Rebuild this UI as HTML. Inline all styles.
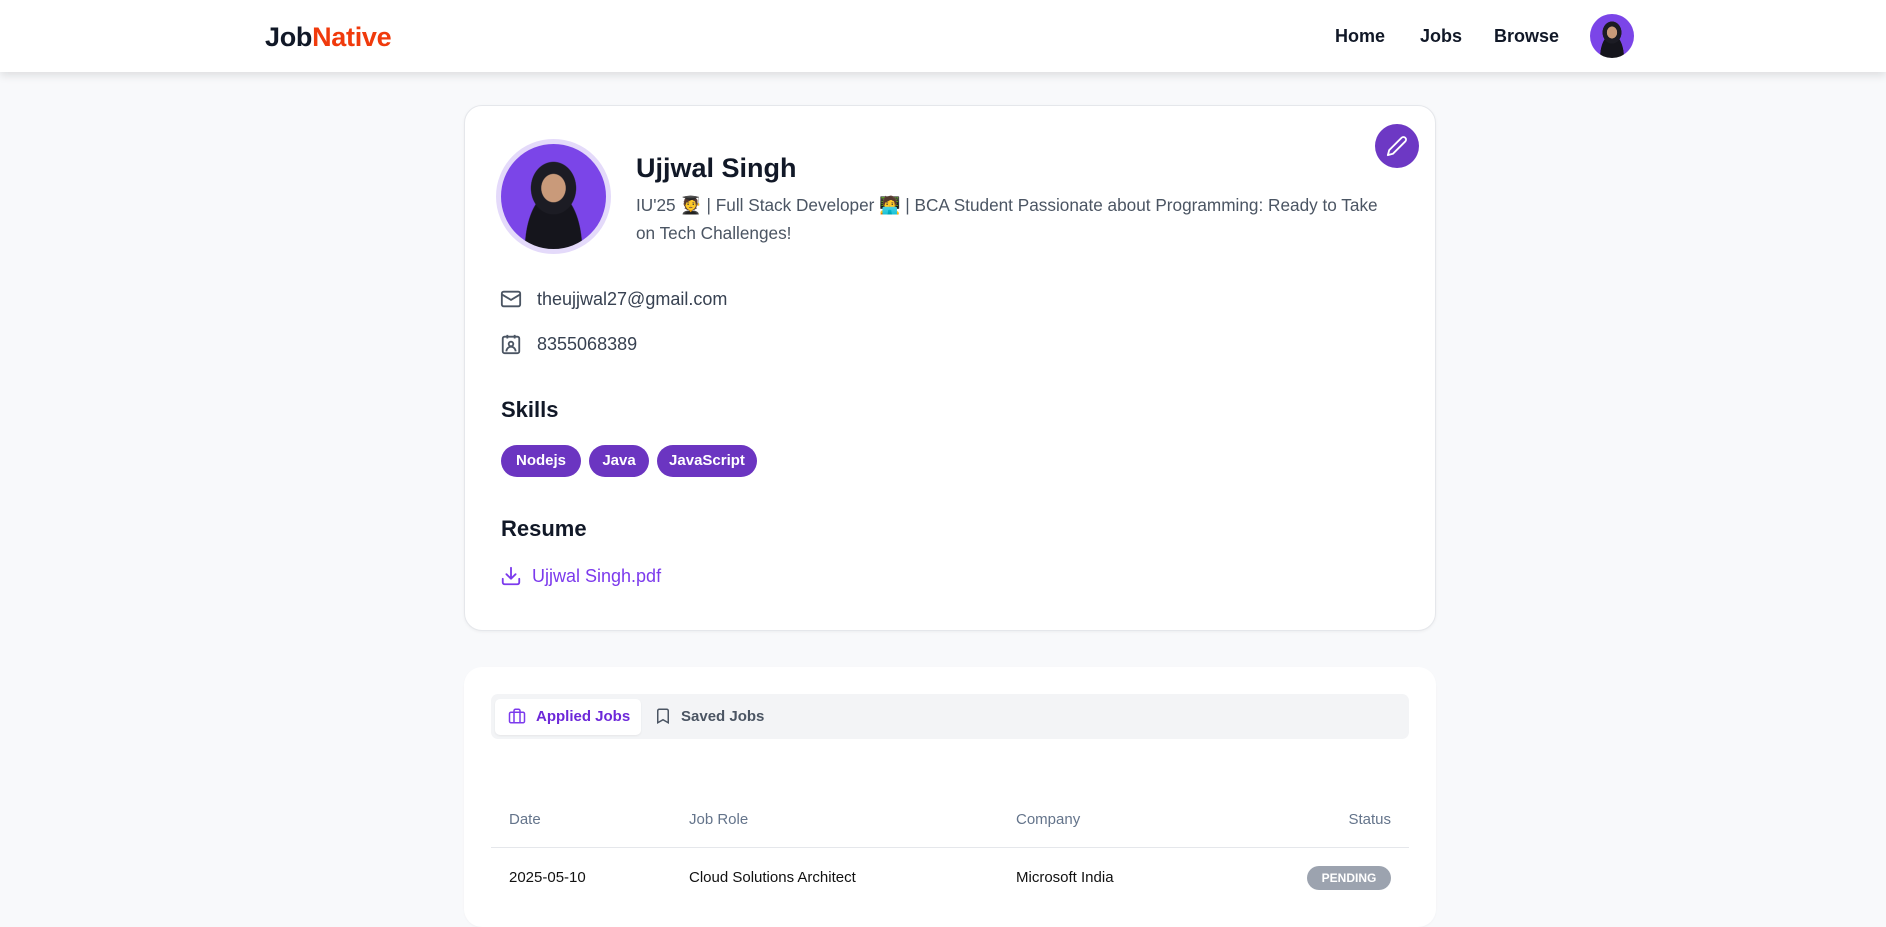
<!DOCTYPE html>
<html><head><meta charset="utf-8"><style>
*{box-sizing:border-box;margin:0;padding:0}
body{width:1886px;height:902px;overflow:hidden;background:#f8f9fb;font-family:"Liberation Sans","Noto Sans CJK SC",sans-serif;color:#111827;position:relative}
.nav{position:absolute;left:0;top:0;width:1886px;height:72px;background:#fff;box-shadow:0 4px 8px rgba(0,0,0,.1)}
.abs{position:absolute}
.logo{left:265px;top:22px;font-size:27px;font-weight:700;letter-spacing:-0.3px}
.nl{top:26px;font-size:18px;font-weight:600}
.av{border-radius:50%;background:radial-gradient(ellipse at 50% 42%,#c99a7a 0 16%,#1c1c24 17% 30%,transparent 31%),radial-gradient(ellipse at 50% 100%,#15151c 0 38%,#7b45e8 39%);}
.card{position:absolute;left:464px;width:972px;background:#fff;border-radius:18px}
.c1{top:105px;height:526px;border:1px solid #e5e7eb;box-shadow:0 1px 3px rgba(0,0,0,.05)}
.c2{top:667px;height:260px;box-shadow:0 1px 2px rgba(0,0,0,.03)}
.badge{position:absolute;top:445px;height:32px;border-radius:16px;background:#6b35c1;color:#fff;font-size:15px;font-weight:700;line-height:32px;text-align:center}
.h{font-size:22px;font-weight:600}
.t{font-size:18px;color:#374151}
.th{position:absolute;top:811px;font-size:15px;color:#64748b;font-weight:500}
.td{position:absolute;top:869px;font-size:15px;color:#111}
</style></head><body>
<div class="nav"></div>
<div class="abs logo">Job<span style="color:#f03a0c">Native</span></div>
<div class="abs nl" style="left:1335px">Home</div>
<div class="abs nl" style="left:1420px">Jobs</div>
<div class="abs nl" style="left:1494px">Browse</div>
<div class="abs av" style="left:1590px;top:14px;width:44px;height:44px"></div>

<div class="card c1"></div>
<div class="abs av" style="left:496px;top:139px;width:115px;height:115px;border:5px solid #e4dafa"></div>
<div class="abs" style="left:636px;top:153px;font-size:27px;font-weight:600">Ujjwal Singh</div>
<div class="abs t" style="left:636px;top:191px;width:762px;line-height:28px;color:#4b5563;font-size:17.2px">IU'25 🧑‍🎓 | Full Stack Developer 🧑‍💻 | BCA Student Passionate about Programming: Ready to Take on Tech Challenges!</div>
<div class="abs" style="left:1375px;top:124px;width:44px;height:44px;border-radius:50%;background:#6d38c4"></div>
<svg class="abs" style="left:1386px;top:135px" width="22" height="22" viewBox="0 0 24 24" fill="none" stroke="#fff" stroke-width="2" stroke-linecap="round" stroke-linejoin="round"><path d="M17 3a2.8 2.8 0 0 1 4 4L7.5 20.5 2 22l1.5-5.5Z"/></svg>

<svg class="abs" style="left:500px;top:288px" width="22" height="22" viewBox="0 0 24 24" fill="none" stroke="#4b5563" stroke-width="2"><rect x="2" y="4" width="20" height="16" rx="2"/><path d="m22 7-10 6L2 7"/></svg>
<div class="abs t" style="left:537px;top:289px">theujjwal27@gmail.com</div>
<svg class="abs" style="left:500px;top:333px" width="22" height="22" viewBox="0 0 24 24" fill="none" stroke="#4b5563" stroke-width="2"><rect x="3" y="4" width="18" height="18" rx="2"/><path d="M16 2v4M8 2v4"/><circle cx="12" cy="12" r="2.5"/><path d="M7 20a5 5 0 0 1 10 0"/></svg>
<div class="abs t" style="left:537px;top:334px">8355068389</div>

<div class="abs h" style="left:501px;top:397px">Skills</div>
<div class="badge" style="left:501px;width:80px">Nodejs</div>
<div class="badge" style="left:589px;width:60px">Java</div>
<div class="badge" style="left:657px;width:100px">JavaScript</div>
<div class="abs h" style="left:501px;top:516px">Resume</div>
<svg class="abs" style="left:500px;top:565px" width="22" height="22" viewBox="0 0 24 24" fill="none" stroke="#7c3aed" stroke-width="2" stroke-linecap="round" stroke-linejoin="round"><path d="M21 15v4a2 2 0 0 1-2 2H5a2 2 0 0 1-2-2v-4"/><path d="m7 10 5 5 5-5M12 15V3"/></svg>
<div class="abs" style="left:532px;top:566px;font-size:18px;color:#7c3aed">Ujjwal Singh.pdf</div>

<div class="card c2"></div>
<div class="abs" style="left:491px;top:694px;width:918px;height:45px;background:#f3f4f6;border-radius:7px"></div>
<div class="abs" style="left:495px;top:699px;width:146px;height:36px;background:#fff;border-radius:5px;box-shadow:0 1px 2px rgba(0,0,0,.06)"></div>
<svg class="abs" style="left:508px;top:707px" width="18" height="18" viewBox="0 0 24 24" fill="none" stroke="#7c3aed" stroke-width="2"><rect x="2" y="7" width="20" height="14" rx="2"/><path d="M16 21V5a2 2 0 0 0-2-2h-4a2 2 0 0 0-2 2v16"/></svg>
<div class="abs" style="left:536px;top:708px;font-size:15px;font-weight:600;color:#6d28d9">Applied Jobs</div>
<svg class="abs" style="left:654px;top:707px" width="18" height="18" viewBox="0 0 24 24" fill="none" stroke="#4b5563" stroke-width="2"><path d="m19 21-7-4-7 4V5a2 2 0 0 1 2-2h10a2 2 0 0 1 2 2v16z"/></svg>
<div class="abs" style="left:681px;top:708px;font-size:15px;font-weight:600;color:#4b5563">Saved Jobs</div>

<div class="th" style="left:509px">Date</div>
<div class="th" style="left:689px">Job Role</div>
<div class="th" style="left:1016px">Company</div>
<div class="th" style="left:1300px;width:91px;text-align:right">Status</div>
<div class="abs" style="left:491px;top:847px;width:918px;height:1px;background:#e5e7eb"></div>
<div class="td" style="left:509px">2025-05-10</div>
<div class="td" style="left:689px">Cloud Solutions Architect</div>
<div class="td" style="left:1016px">Microsoft India</div>
<div class="abs" style="left:1307px;top:866px;width:84px;height:24px;border-radius:12px;background:#9ca3af;color:#fff;font-size:12px;font-weight:700;text-align:center;line-height:24px">PENDING</div>
</body></html>
